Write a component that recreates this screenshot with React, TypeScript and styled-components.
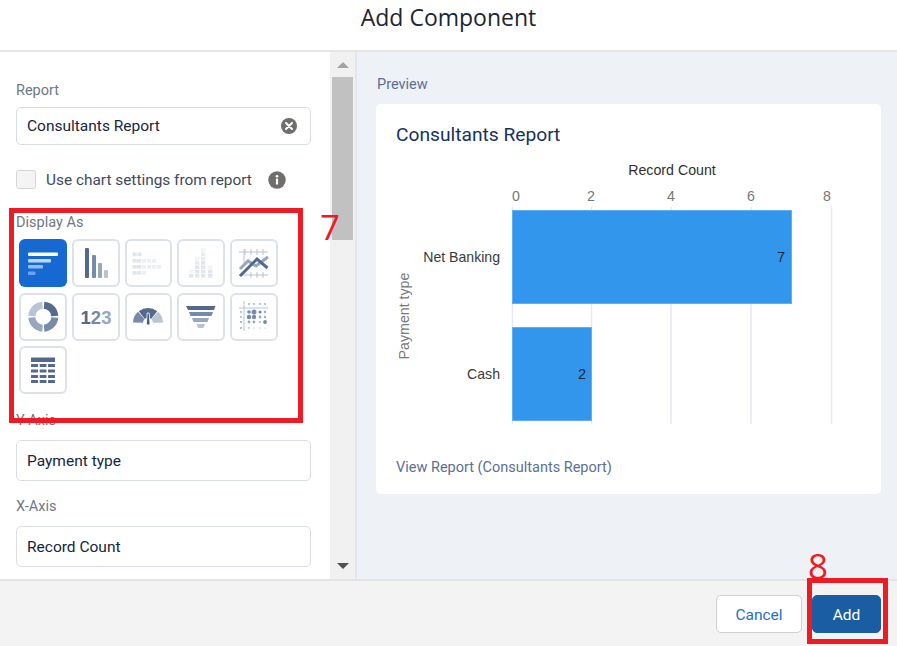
import React from "react";
import styled, { createGlobalStyle } from "styled-components";

const Global = createGlobalStyle`
  html, body { margin: 0; padding: 0; background: #fff; }
  body { font-family: Roboto, "Liberation Sans", sans-serif; }
  * { box-sizing: border-box; }
`;

const Page = styled.div`
  position: relative;
  width: 897px;
  height: 646px;
  overflow: hidden;
  display: grid;
  grid-template-rows: 52px 527px 67px;
`;
const Header = styled.header`
  border-bottom: 2px solid #e6e6e6;
  text-align: center;
  font-family: "Open Sans", sans-serif;
  font-size: 23px;
  line-height: 34px;
  color: #1d2533;
`;
const Body = styled.div`
  display: grid;
  grid-template-columns: 330px 25px 1fr;
  min-height: 0;
`;
const Form = styled.div`
  padding: 28px 19px 0 16px;
  overflow: hidden;
`;
const Label = styled.div<{ $gap: number }>`
  font-size: 14.5px;
  line-height: 20px;
  height: 20px;
  padding-top: 1px;
  color: #6f7787;
  margin-bottom: ${(p) => p.$gap}px;
`;
const Field = styled.div<{ $h: number; $after: number; $lift: number }>`
  height: ${(p) => p.$h}px;
  margin-bottom: ${(p) => p.$after}px;
  border: 1px solid #d8dde6;
  border-radius: 5px;
  padding: 0 13px ${(p) => p.$lift}px 10px;
  display: flex;
  align-items: center;
  justify-content: space-between;
  font-size: 15.5px;
  line-height: 20px;
  color: #16263c;
`;
const CheckRow = styled.div`
  height: 19px;
  display: flex;
  align-items: center;
  font-size: 15.4px;
  color: #3e4a5c;
  margin-bottom: 23px;
`;
const Check = styled.span`
  width: 20px;
  height: 19px;
  border: 1px solid #d5d5d5;
  border-radius: 3px;
  background: #f4f4f4;
  margin-right: 10px;
`;
const InfoWrap = styled.span`
  display: flex;
  margin-left: 16px;
`;
const TileGrid = styled.div`
  display: grid;
  grid-template-columns: repeat(5, 47.75px);
  grid-auto-rows: 48px;
  column-gap: 5px;
  row-gap: 5.5px;
  margin: 0 0 16px 3px;
`;
const Tile = styled.div<{ $active?: boolean }>`
  border: ${(p) => (p.$active ? "0" : "2px solid #dde2ea")};
  border-radius: 6px;
  background: ${(p) => (p.$active ? "#1569d0" : "#fff")};
  display: flex;
  align-items: center;
  justify-content: center;
  overflow: hidden;
  svg { flex: none; display: block; }
`;
const Scrollbar = styled.div`
  background: #f1f1f1;
  display: flex;
  flex-direction: column;
  align-items: center;
  padding: 10px 2px 10px;
`;
const ArrowUp = styled.span`
  width: 0;
  height: 0;
  border-left: 6px solid transparent;
  border-right: 6px solid transparent;
  border-bottom: 6px solid #a3a3a3;
  margin-bottom: 9px;
`;
const Thumb = styled.span`
  width: 100%;
  height: 163px;
  background: #c1c1c1;
`;
const ArrowDown = styled.span`
  width: 0;
  height: 0;
  margin-top: auto;
  border-left: 6px solid transparent;
  border-right: 6px solid transparent;
  border-top: 6px solid #505050;
`;
const PreviewPane = styled.div`
  background: #eef1f6;
  border-left: 2px solid #e3e7f0;
  padding: 23px 16px 0 19px;
`;
const PreviewLabel = styled.div`
  font-size: 14.5px;
  line-height: 20px;
  color: #5c6f93;
  margin-bottom: 9px;
  padding-left: 1px;
`;
const Card = styled.div`
  width: 505px;
  height: 390px;
  background: #fff;
  border-radius: 5px;
  padding: 20px;
  display: flex;
  flex-direction: column;
`;
const CardTitle = styled.div`
  font-size: 19.2px;
  line-height: 22px;
  color: #16325c;
`;
const Chart = styled.svg`
  display: block;
  margin: 12px 0 0 -20px;
  font-family: "Liberation Sans", Arial, sans-serif;
  flex: none;
`;
const CardLink = styled.div`
  font-size: 14.5px;
  line-height: 20px;
  color: #5c6f93;
  margin-top: auto;
  margin-bottom: -4px;
`;
const Footer = styled.footer`
  background: #f3f3f3;
  border-top: 2px solid #e4e4e4;
  display: flex;
  justify-content: flex-end;
  padding: 14px 16px 0 0;
  gap: 10px;
`;
const Button = styled.div<{ $primary?: boolean }>`
  height: 38px;
  width: ${(p) => (p.$primary ? 69 : 86)}px;
  border-radius: 5px;
  border: 1px solid ${(p) => (p.$primary ? "#1b5da3" : "#d0d0d0")};
  background: ${(p) => (p.$primary ? "#1b5da3" : "#fff")};
  color: ${(p) => (p.$primary ? "#fff" : "#1f6fc4")};
  font-size: 15.5px;
  padding-top: 1px;
  display: flex;
  align-items: center;
  justify-content: center;
`;
const Callout = styled.div<{ $x: number; $y: number; $w: number; $h: number }>`
  position: absolute;
  left: ${(p) => p.$x}px;
  top: ${(p) => p.$y}px;
  width: ${(p) => p.$w}px;
  height: ${(p) => p.$h}px;
  border: 5px solid #ed1c24;
`;
const CalloutNumber = styled.div<{ $x: number; $y: number }>`
  position: absolute;
  left: ${(p) => p.$x}px;
  top: ${(p) => p.$y}px;
  font-family: "Open Sans", sans-serif;
  font-size: 35px;
  line-height: 40px;
  color: #ed1c24;
`;

const C1 = "#54698d", C2 = "#768aa9", C3 = "#98a7c0", C4 = "#b8c3d4";
const F = "#e1e5ec", F2 = "#eceff4";

const Ico: React.FC<{ children: React.ReactNode; size?: number }> = ({ children, size = 44 }) => (
  <svg width={size} height={size} viewBox="2 2 44 44">{children}</svg>
);

const BarIcon = () => (
  <svg width={48} height={48} viewBox="0 0 48 48">
    <rect x="9" y="13.5" width="30" height="3.5" rx="1" fill="#fff" />
    <rect x="9" y="20" width="23" height="3.5" rx="1" fill="#bcd8f5" />
    <rect x="9" y="26" width="15" height="3.5" rx="1" fill="#8fbdee" />
    <rect x="9" y="32.5" width="7.5" height="3.5" rx="1" fill="#6aa5e6" />
  </svg>
);
const ColumnIcon = () => (
  <Ico>
    <rect x="13" y="9" width="4" height="30" rx="1" fill={C1} />
    <rect x="20" y="16" width="4" height="23" rx="1" fill={C2} />
    <rect x="26" y="24" width="4" height="15" rx="1" fill={C3} />
    <rect x="32" y="31" width="4" height="8" rx="1" fill={C4} />
  </Ico>
);
const HeatIcon = () => {
  const rows: [number, number[]][] = [
    [13.5, [8.5, 13.5]],
    [20, [8.5, 13, 18, 23, 28]],
    [26, [8.5, 13, 18, 23, 28, 33]],
    [32, [8.5, 13, 18]],
  ];
  return (
    <Ico>
      {rows.map(([y, xs]) =>
        xs.map((x, i) => (
          <rect key={`${y}-${x}`} x={x} y={y} width="4.2" height="3.6" fill={i < 2 ? F : F2} />
        ))
      )}
    </Ico>
  );
};
const StackIcon = () => {
  const cols: [number, number][] = [
    [12, 2],
    [18, 5],
    [24, 7],
    [31, 3],
  ];
  return (
    <Ico>
      {cols.map(([x, n]) =>
        Array.from({ length: n }, (_, i) => (
          <rect key={`${x}-${i}`} x={x} y={35 - i * 4.3} width="4.4" height="3.6" fill={i < n / 2 ? F : i < n - 1 ? "#e8ebf1" : "#f1f3f7"} />
        ))
      )}
    </Ico>
  );
};
const LineIcon = () => (
  <Ico>
    <g stroke={C4} strokeWidth="1" fill="none">
      <path d="M9 13H38M9 36H38M15 10V16M21 10V16M27 10V16M33 10V16M21 33V39M27 33V39M33 33V39M14 10V24" />
    </g>
    <polyline points="10,30 18,22 26,27 38,18" fill="none" stroke={C3} strokeWidth="3" />
    <polyline points="10,37 27,20 37.5,29" fill="none" stroke={C1} strokeWidth="3" />
  </Ico>
);
const seg = (cx: number, cy: number, r: number, ri: number, a0: number, a1: number) => {
  const pt = (rad: number, a: number) => {
    const t = ((a - 90) * Math.PI) / 180;
    return `${(cx + rad * Math.cos(t)).toFixed(2)} ${(cy + rad * Math.sin(t)).toFixed(2)}`;
  };
  return `M${pt(r, a0)}A${r} ${r} 0 0 1 ${pt(r, a1)}L${pt(ri, a1)}A${ri} ${ri} 0 0 0 ${pt(ri, a0)}Z`;
};
const DonutIcon = () => (
  <Ico>
    <path d={seg(24.3, 23.7, 15, 8, 4, 86)} fill={C1} />
    <path d={seg(24.3, 23.7, 15, 8, 94, 176)} fill={C2} />
    <path d={seg(24.3, 23.7, 15, 8, 184, 266)} fill={C3} />
    <path d={seg(24.3, 23.7, 15, 8, 274, 356)} fill={C4} />
  </Ico>
);
const NumberIcon = () => (
  <Ico>
    <text x="24" y="31" textAnchor="middle" fontFamily="Liberation Sans" fontWeight="700" fontSize="18.5">
      <tspan fill={C1}>1</tspan>
      <tspan fill={C2}>2</tspan>
      <tspan fill={C3}>3</tspan>
    </text>
  </Ico>
);
const GaugeIcon = () => (
  <Ico>
    <path d={seg(24, 30, 15, 5, 272, 318)} fill={C2} />
    <path d={seg(24, 30, 15, 5, 322, 38)} fill={C1} />
    <path d={seg(24, 30, 15, 5, 42, 88)} fill={C4} />
    <path d="M23.2 20L25.2 20L26 31A2.2 2.2 0 0 1 22.4 31Z" fill="#3f5a85" stroke="#fff" strokeWidth="0.8" />
  </Ico>
);
const FunnelIcon = () => (
  <Ico>
    <path d="M9 13H38.5L37 17H11Z" fill={C1} />
    <path d="M12 19H36L34.5 23H13.5Z" fill={C2} />
    <path d="M15 25H32L30.5 29H16.5Z" fill={C3} />
    <path d="M19.5 31H28L26.5 35H21Z" fill={C4} />
  </Ico>
);
const ScatterIcon = () => {
  const xs = [11, 19, 24, 30, 35];
  const ys = [11, 19, 24, 29, 35];
  const r = [
    [0, 0.9, 0.9, 0.9, 0.9],
    [0.9, 1.8, 2.5, 1.6, 1.2],
    [0.9, 2.2, 2.2, 1.4, 1.2],
    [1, 1.4, 1.4, 0.9, 1.9],
    [1, 0.8, 0.6, 0.6, 0.6],
  ];
  return (
    <Ico>
      <path d="M14 8V38M9 15H38" stroke={C4} strokeWidth="1" fill="none" />
      {ys.map((y, j) =>
        xs.map((x, i) =>
          r[j][i] ? <circle key={`${i}-${j}`} cx={x} cy={y} r={r[j][i]} fill={r[j][i] > 1.5 ? C2 : C3} /> : null
        )
      )}
    </Ico>
  );
};
const TableIcon = () => (
  <Ico>
    <rect x="12" y="11.5" width="24" height="4.5" fill={C1} />
    {[18, 23.5, 29, 34].map((y) =>
      [[12, 7], [20.7, 6.8], [29, 7]].map(([x, w]) => (
        <rect key={`${y}-${x}`} x={x} y={y} width={w} height="3" rx="0.5" fill={C1} />
      ))
    )}
  </Ico>
);

const ClearIcon = () => (
  <svg width="16" height="16" viewBox="0 0 16 16">
    <circle cx="8" cy="8" r="8" fill="#706e6b" />
    <path d="M5 5L11 11M11 5L5 11" stroke="#fff" strokeWidth="2" strokeLinecap="round" />
  </svg>
);
const InfoIcon = () => (
  <svg width="18" height="18" viewBox="0 0 18 18">
    <circle cx="9" cy="9" r="8.7" fill="#706e6b" />
    <circle cx="9" cy="5.2" r="1.3" fill="#fff" />
    <rect x="7.9" y="7.6" width="2.2" height="6" rx="0.4" fill="#fff" />
  </svg>
);

const BarChart = () => {
  const ticks = [
    { v: "0", tx: 140, gx: 136.5 },
    { v: "2", tx: 215, gx: 215.5 },
    { v: "4", tx: 295, gx: 295 },
    { v: "6", tx: 375, gx: 375 },
    { v: "8", tx: 451, gx: 455.5 },
  ];
  return (
    <Chart width="505" height="280" viewBox="0 0 505 280">
      <text x="296" y="17" textAnchor="middle" fontSize="14.2" fill="#2f2f2f">Record Count</text>
      {ticks.map((t) => (
        <text key={t.v} x={t.tx} y="43" textAnchor="middle" fontSize="14.2" fill="#777">{t.v}</text>
      ))}
      {ticks.map((t) => (
        <line key={t.gx} x1={t.gx} x2={t.gx} y1="49" y2="266" stroke="#e4e9f2" strokeWidth="1.5" />
      ))}
      <rect x="136.5" y="52.5" width="279" height="93" fill="#3296ed" stroke="#62aef1" />
      <rect x="136.5" y="169.5" width="79" height="93" fill="#3296ed" stroke="#62aef1" />
      <text x="409" y="104" textAnchor="end" fontSize="14.5" fill="#16263c">7</text>
      <text x="210" y="221" textAnchor="end" fontSize="14.5" fill="#16263c">2</text>
      <text x="124" y="104" textAnchor="end" fontSize="14.1" fill="#3a3a3a">Net Banking</text>
      <text x="124" y="221" textAnchor="end" fontSize="14.1" fill="#3a3a3a">Cash</text>
      <text transform="translate(33 158) rotate(-90)" textAnchor="middle" fontSize="14.2" fill="#7a7a7a">Payment type</text>
    </Chart>
  );
};

export default function App() {
  return (
    <Page>
      <Global />
      <Header>Add Component</Header>
      <Body>
        <Form>
          <Label $gap={7}>Report</Label>
          <Field $h={38} $after={25} $lift={1}>
            Consultants Report
            <ClearIcon />
          </Field>
          <CheckRow>
            <Check />
            Use chart settings from report
            <InfoWrap><InfoIcon /></InfoWrap>
          </CheckRow>
          <Label $gap={7}>Display As</Label>
          <TileGrid>
            <Tile $active><BarIcon /></Tile>
            <Tile><ColumnIcon /></Tile>
            <Tile><HeatIcon /></Tile>
            <Tile><StackIcon /></Tile>
            <Tile><LineIcon /></Tile>
            <Tile><DonutIcon /></Tile>
            <Tile><NumberIcon /></Tile>
            <Tile><GaugeIcon /></Tile>
            <Tile><FunnelIcon /></Tile>
            <Tile><ScatterIcon /></Tile>
            <Tile><TableIcon /></Tile>
          </TileGrid>
          <Label $gap={10}>Y-Axis</Label>
          <Field $h={41} $after={15} $lift={0}>Payment type</Field>
          <Label $gap={10}>X-Axis</Label>
          <Field $h={41} $after={0} $lift={0}>Record Count</Field>
        </Form>
        <Scrollbar>
          <ArrowUp />
          <Thumb />
          <ArrowDown />
        </Scrollbar>
        <PreviewPane>
          <PreviewLabel>Preview</PreviewLabel>
          <Card>
            <CardTitle>Consultants Report</CardTitle>
            <BarChart />
            <CardLink>View Report (Consultants Report)</CardLink>
          </Card>
        </PreviewPane>
      </Body>
      <Footer>
        <Button>Cancel</Button>
        <Button $primary>Add</Button>
      </Footer>
      <Callout $x={9} $y={208} $w={294} $h={215} />
      <CalloutNumber $x={320} $y={207}>7</CalloutNumber>
      <Callout $x={807} $y={578} $w={81} $h={66} />
      <CalloutNumber $x={808} $y={546}>8</CalloutNumber>
    </Page>
  );
}
